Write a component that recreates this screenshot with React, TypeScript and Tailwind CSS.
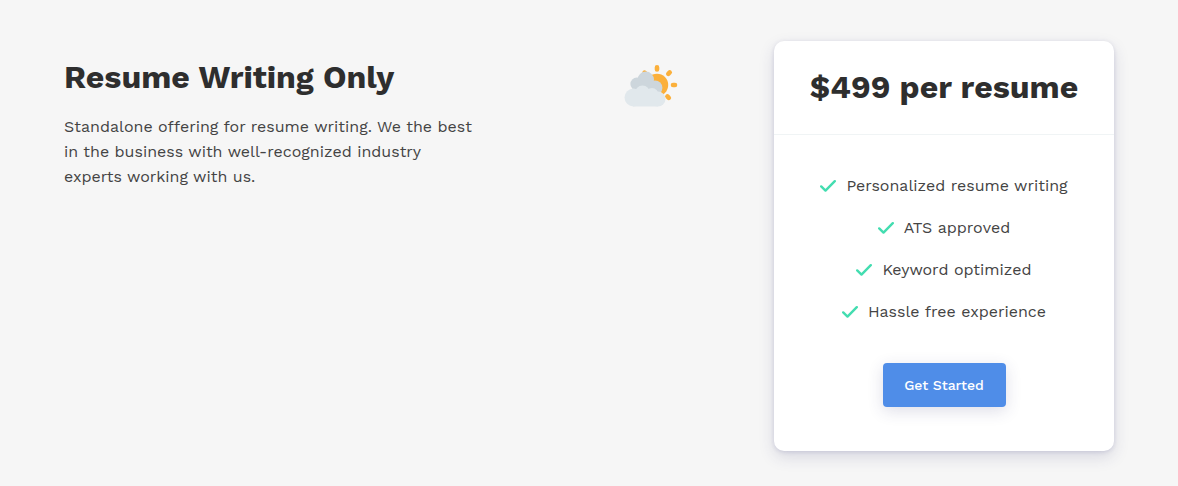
import React from 'react';

const features = [
  'Personalized resume writing',
  'ATS approved',
  'Keyword optimized',
  'Hassle free experience',
];

const WeatherIcon: React.FC = () => (
  <svg width="54" height="44" viewBox="0 0 54 44" fill="none" className="shrink-0" aria-hidden="true">
    {/* Sun and rays */}
    <g stroke="#fbb03b" strokeWidth="4.6" strokeLinecap="round">
      <path d="M33 3.4v2M44.3 9.8l1.4-1.4M49 21h2M43.4 32.4l1.4 1.4M20.5 8.6l1 1" />
    </g>
    <circle cx="33" cy="21" r="11.2" fill="#fbb03b" />
    {/* Back cloud */}
    <g fill="#cdd6dc">
      <circle cx="21.8" cy="15.8" r="8.2" />
      <circle cx="12.8" cy="20" r="6.4" />
      <circle cx="31" cy="23.8" r="7.4" />
      <rect x="12" y="18" width="18" height="12" />
    </g>
    {/* Front cloud */}
    <g fill="#e1e8ec">
      <circle cx="9.5" cy="33.5" r="9" />
      <circle cx="18.5" cy="29" r="7.5" />
      <circle cx="28" cy="30.5" r="6.5" />
      <circle cx="34" cy="35" r="7.5" />
      <rect x="9" y="28" width="25" height="14.5" />
    </g>
  </svg>
);

const CheckIcon: React.FC = () => (
  <svg width="16" height="12" viewBox="0 0 16 12" fill="none" className="shrink-0" aria-hidden="true">
    <path d="M1.2 6.4l4.3 4.2L14.8 1.2" stroke="#43ddb0" strokeWidth="2.4" strokeLinecap="round" strokeLinejoin="round" />
  </svg>
);

const App: React.FC = () => {
  return (
    <section className="min-h-screen bg-[#f6f6f6] px-16 pt-[41px] pb-9 font-['Work_Sans','Inter',sans-serif] text-base text-[#444444]">
      <div className="flex items-start justify-between">
        {/* Plan description */}
        <div className="flex w-[614px] items-start justify-between pt-4">
          <div className="w-[420px]">
            <h2 className="text-[32px] leading-10 font-bold text-[#2e2e2e]">Resume Writing Only</h2>
            <p className="mt-[17px] leading-[25px]">
              Standalone offering for resume writing. We the best in the business with well-recognized industry experts
              working with us.
            </p>
          </div>
          <div className="pt-[7px]">
            <WeatherIcon />
          </div>
        </div>

        {/* Pricing card */}
        <div className="w-[340px] rounded-[10px] bg-white text-center shadow-[0_6px_16px_rgba(50,50,110,0.15),0_1px_4px_rgba(50,50,120,0.14)]">
          <div className="border-b border-[#f0f4f5] pt-[26px] pb-[27px]">
            <h3 className="text-[32px] leading-10 font-bold text-[#2e2e2e]">$499 per resume</h3>
          </div>
          <div className="px-6 pt-[38px] pb-11">
            <ul className="flex flex-col gap-4">
              {features.map((feature) => (
                <li key={feature} className="flex items-center justify-center gap-[10px] leading-[26px]">
                  <CheckIcon />
                  <span>{feature}</span>
                </li>
              ))}
            </ul>
            <button
              type="button"
              className="mt-[38px] h-11 w-[123px] rounded-[4px] bg-[#4f8de8] text-sm font-medium text-white shadow-[0_4px_16px_rgba(50,50,110,0.16)]"
            >
              Get Started
            </button>
          </div>
        </div>
      </div>
    </section>
  );
};

export default App;
